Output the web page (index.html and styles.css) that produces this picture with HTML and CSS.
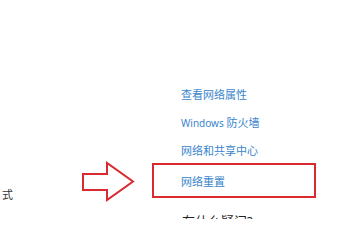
FILE: index.html
```html
<!DOCTYPE html>
<html lang="zh-CN">
<head>
<meta charset="utf-8">
<link rel="stylesheet" href="styles.css">
</head>
<body>
<div class="page">
  <div class="left">
    <div class="left-text">式</div>
  </div>
  <div class="right">
    <div class="link">查看网络属性</div>
    <div class="link"><span class="latin">Windows</span> 防火墙</div>
    <div class="link">网络和共享中心</div>
    <div class="link highlight">网络重置</div>
    <div class="heading">有什么疑问?</div>
  </div>
  <svg class="arrow" width="56" height="44" viewBox="0 0 56 44">
    <polygon points="3,14 27,14 27,3 53,21.5 27,40 27,30 3,30" fill="#fff" stroke="#d92a30" stroke-width="2" stroke-linejoin="miter"/>
  </svg>
</div>
</body>
</html>
```

FILE: styles.css
```css
html, body {
  margin: 0;
  padding: 0;
  background: #fff;
}
body {
  width: 348px;
  height: 219px;
  overflow: hidden;
  font-family: "Noto Sans", "Noto Sans CJK SC", sans-serif;
}
.page {
  position: relative;
  display: flex;
  width: 348px;
  height: 219px;
}
.left {
  width: 152px;
  flex: none;
}
.left-text {
  padding-top: 187px;
  padding-left: 2px;
  font-size: 11px;
  line-height: 16px;
  color: #333;
}
.right {
  width: 164px;
  flex: none;
  padding-top: 81px;
}
.link {
  font-size: 11px;
  line-height: 28px;
  color: #3a85cc;
  padding-left: 29px;
  white-space: nowrap;
}
.latin {
  font-size: 10px;
}
.highlight {
  margin-top: -2px;
  border: 2px solid #d92a30;
  padding: 6px 0 3px 27px;
  line-height: 22px;
}
.heading {
  margin-top: 13px;
  padding-left: 30px;
  font-size: 13px;
  line-height: 20px;
  color: #222;
  white-space: nowrap;
}
.arrow {
  position: absolute;
  left: 80px;
  top: 160px;
}
```
